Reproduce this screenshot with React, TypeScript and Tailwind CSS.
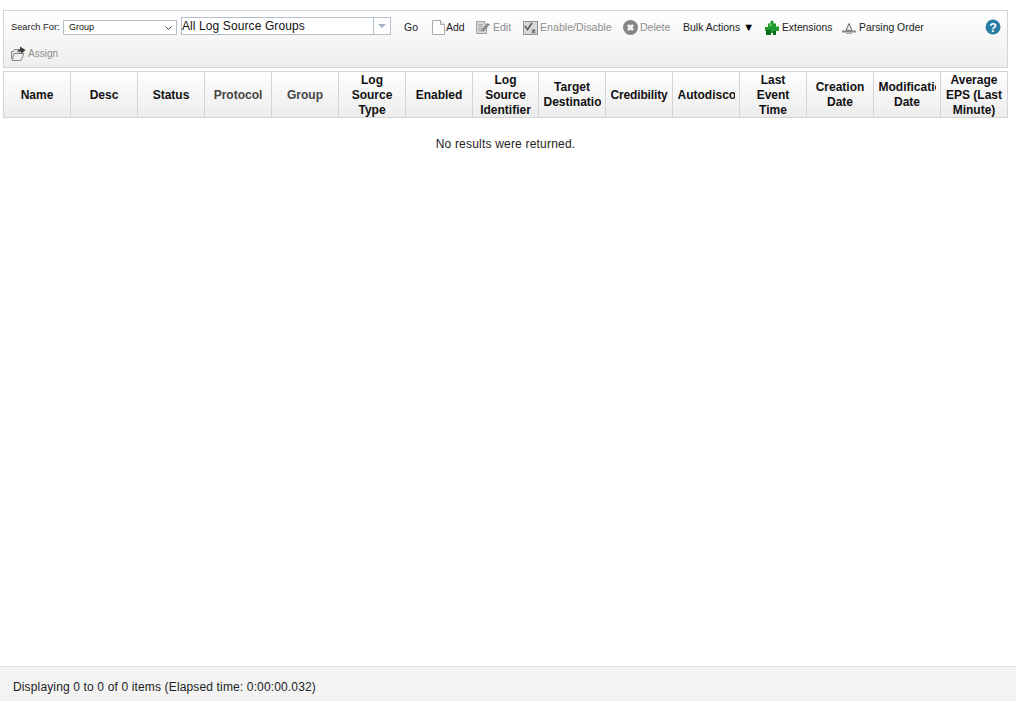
const cols: string[][] = [
  ["Name"], ["Desc"], ["Status"], ["Protocol"], ["Group"], ["Log", "Source", "Type"], ["Enabled"],
  ["Log", "Source", "Identifier"], ["Target", "Destination"], ["Credibility"], ["Autodiscovered"],
  ["Last", "Event", "Time"], ["Creation", "Date"], ["Modification", "Date"], ["Average", "EPS (Last", "Minute)"],
];

const widths = [67, 67, 67, 67, 67, 67, 67, 66, 67, 67, 67, 67, 67, 67, 67];

function Doc() {
  return (
    <svg width="13" height="15" viewBox="0 0 13 15" className="shrink-0">
      <path d="M.5.500h8l4 4v10H.5z" fill="#fff" stroke="#a8a8a8" />
      <path d="M8.500.500v4h4" fill="#efefef" stroke="#a8a8a8" />
    </svg>
  );
}
function EditIcon() {
  return (
    <svg width="14" height="13" viewBox="0 0 14 13" className="shrink-0">
      <path d="M.5.500h8v2l2 1v9H.5z" fill="#d8d8d8" stroke="#a2a2a2" />
      <path d="M2 3.500h5M2 5.500h5M2 7.500h4M2 9.500h3" stroke="#ababab" />
      <path d="M5.500 8.500L11.500 2 14 3.500 8 10l-2.500 1z" fill="#8a8a8a" />
    </svg>
  );
}
function CheckIcon() {
  return (
    <svg width="15" height="14" viewBox="0 0 15 14" className="shrink-0">
      <rect x=".5" y=".5" width="14" height="13" fill="#d8d8d8" stroke="#8f8f8f" />
      <path d="M2 5l2.500 3.500L9 2" fill="none" stroke="#555" strokeWidth="1.400" />
      <path d="M9 8.500l3 3.500M12 8.500L9 12" stroke="#666" strokeWidth="1.200" />
    </svg>
  );
}
function DeleteIcon() {
  return (
    <svg width="15" height="15" viewBox="0 0 15 15" className="shrink-0">
      <circle cx="7.500" cy="7.500" r="7.500" fill="#858585" />
      <path d="M5 5l5 5M10 5l-5 5" stroke="#f4f4f4" strokeWidth="2.600" />
    </svg>
  );
}
function Puzzle() {
  return (
    <svg width="14" height="15" viewBox="0 0 14 15" className="shrink-0">
      <path d="M3 3.500h2.500V2a1.500 1.500 0 0 1 3 0v1.500H11v3h3V11H11v4H8V13H6v2H1v-4H0V7h3z" fill="#1f9a2e" />
      <path d="M1 10h5v5H1zM8 11h3v4H8z" fill="#0b6d1d" />
      <path d="M4 4h3v2H4z" fill="#55c050" />
    </svg>
  );
}
function Parsing() {
  return (
    <svg width="14" height="12" viewBox="0 0 14 12" className="shrink-0">
      <path d="M7 1.500L4 8.500h6z" fill="#e8e8e8" stroke="#666" />
      <path d="M0 9.500h14" stroke="#888" strokeWidth="2" />
      <path d="M4 11.500h6" stroke="#aaa" />
    </svg>
  );
}
function AssignIcon() {
  return (
    <svg width="15" height="15" viewBox="0 0 15 15" className="shrink-0">
      <path d="M.5 5.500h2l1-2h5v9H.5z" fill="#e6e6e6" stroke="#888" />
      <path d="M1 14.500l2-7h10l-3 7z" fill="#eee" stroke="#888" />
      <path d="M5.500 5.500L9 3V.5l5.500 3.500L10 8V5.500z" fill="#3c3c3c" />
    </svg>
  );
}
function Help() {
  return (
    <svg width="16" height="16" viewBox="0 0 16 16" className="shrink-0">
      <circle cx="8" cy="8" r="7.500" fill="#2a7ea6" />
      <text x="8" y="12.500" textAnchor="middle" fill="#fff" fontSize="12.500" fontWeight="700" fontFamily="Liberation Sans">?</text>
    </svg>
  );
}

function Tool({ icon, label, muted, className }: { icon?: React.ReactNode; label: React.ReactNode; muted?: boolean; className?: string }) {
  return (
    <div className={`flex h-full shrink-0 items-center whitespace-nowrap ${muted ? "text-[#8e8e8e]" : "text-[#222]"} ${className ?? ""}`}>
      {icon}
      <span>{label}</span>
    </div>
  );
}

export default function App() {
  return (
    <div className="flex h-[701px] flex-col bg-white text-[#222] [font-family:'Liberation_Sans',Arial,sans-serif]">
      <div className="mx-[3px] mt-[10px] flex h-[58px] w-[1005px] flex-col border border-[#d4d4d4] bg-gradient-to-b from-white to-[#eeeeee] pl-[7px]">
        <div className="mt-[6px] flex h-[21px] items-start text-[10.5px]">
          <span className="mt-[3px] w-[49px] text-[9.3px] leading-[15px] whitespace-nowrap text-[#222]">Search For:</span>
          <div className="mt-[3px] ml-[3px] flex h-[15px] w-[114px] items-center justify-between border border-[#b5c0cc] bg-white pr-[4px] pl-[4px] text-[9px] text-[#111]">
            <span className="pl-px">Group</span>
            <svg width="7" height="4" viewBox="0 0 7 4"><path d="M.5.500L3.500 3.500 6.500.500" fill="none" stroke="#444" /></svg>
          </div>
          <div className="ml-[4px] flex h-[18px] w-[210px] items-center justify-between border border-[#b5c0cc] bg-white text-[12px] tracking-[0.1px] text-[#111]">
            <span className="-mt-[1px]">All Log Source Groups</span>
            <div className="flex h-full w-[17px] items-center justify-center border-l border-[#b5c0cc]">
              <svg width="8" height="4" viewBox="0 0 8 4"><path d="M0 0h8L4 4z" fill="#a8b4c4" /></svg>
            </div>
          </div>
          <Tool label="Go" className="ml-[13px] w-[14px]" />
          <Tool icon={<Doc />} label="Add" className="ml-[14px] w-[33px] gap-[1px]" />
          <Tool icon={<EditIcon />} label="Edit" muted className="ml-[11px] w-[36px] gap-[3px]" />
          <Tool icon={<CheckIcon />} label="Enable/Disable" muted className="ml-[11px] w-[89px] gap-[2px] tracking-[0.07px]" />
          <Tool icon={<DeleteIcon />} label="Delete" muted className="ml-[11px] w-[48px] gap-[2px]" />
          <Tool label={<span className="flex items-center gap-[3px]">Bulk Actions<span className="text-[11px] text-black">▼</span></span>} className="ml-[12px] w-[69px]" />
          <Tool icon={<Puzzle />} label="Extensions" className="ml-[13px] w-[66px] gap-[3px] text-[10.3px]" />
          <Tool icon={<Parsing />} label="Parsing Order" className="ml-[11px] w-[81px] gap-[3px] text-[10.4px]" />
          <div className="mt-[2px] ml-auto mr-[6px]"><Help /></div>
        </div>
        <div className="mt-[8px] h-[15px] text-[10px]">
          <Tool icon={<AssignIcon />} label="Assign" muted className="gap-[2px]" />
        </div>
      </div>

      <div className="mx-[3px] mt-[3px] flex h-[47px] w-[1005px] border-y border-l border-[#d4d4d4]">
        {cols.map((lines, i) => (
          <div
            key={i}
            style={{ width: widths[i] }}
            className={`flex shrink-0 items-center justify-center border-r border-[#d4d4d4] bg-gradient-to-b from-white to-[#ececec] pt-[2px] text-center text-[12px] leading-[15px] font-bold whitespace-nowrap ${i === 3 || i === 4 ? "text-[#444]" : "text-[#111]"}`}
          >
            <div className={`w-[57px] overflow-hidden ${lines.length === 2 ? "-mt-[2px]" : ""} ${i === 9 ? "tracking-[-0.15px]" : ""}`}>
              {lines.map((l) => (
                <div key={l}>{l}</div>
              ))}
            </div>
          </div>
        ))}
      </div>

      <div className="flex-1 pt-[19px] pr-[5px] text-center text-[12px] leading-[15px] tracking-[0.2px] text-[#222]">No results were returned.</div>

      <div className="flex h-[35px] items-center border-t border-[#e0e0e0] bg-[#f3f3f3] pt-[6px] pl-[13px] text-[12px] tracking-[0.145px] text-[#222]">
        Displaying 0 to 0 of 0 items (Elapsed time: 0:00:00.032)
      </div>
    </div>
  );
}
